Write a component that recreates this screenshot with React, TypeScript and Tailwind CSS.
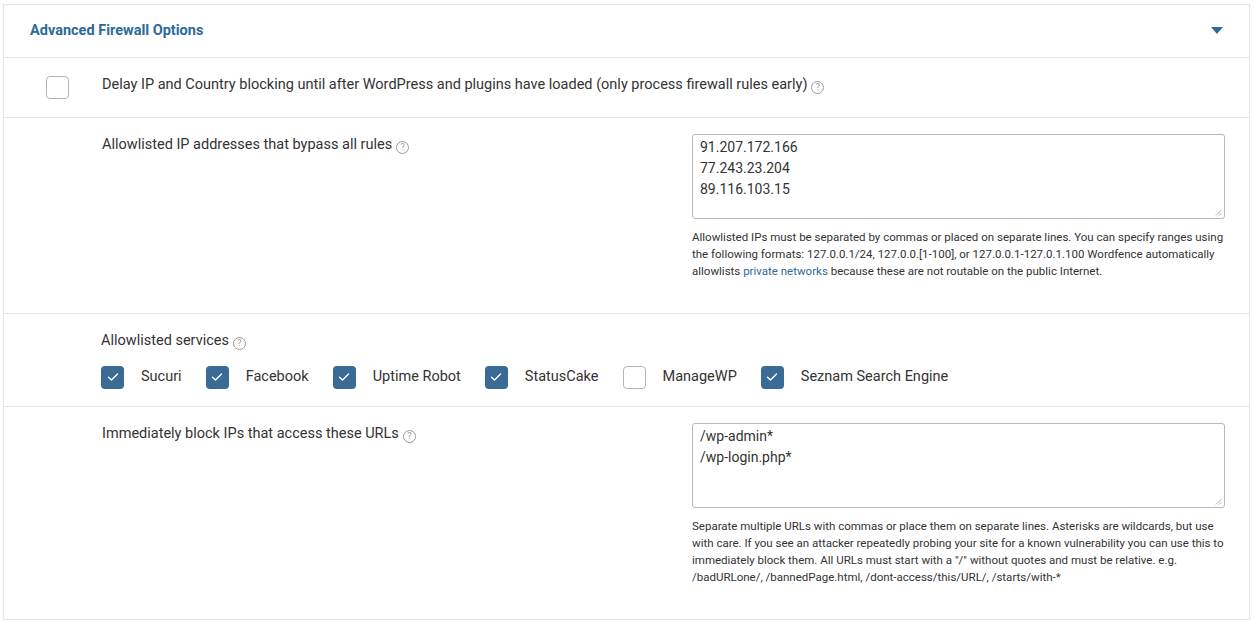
import React from "react";

function Help() {
  return (
    <span className="ml-1 inline-flex h-[13px] w-[13px] items-center justify-center rounded-full border border-[#9a9a9a] align-[-1px] text-[9px] leading-none text-[#9a9a9a]">
      ?
    </span>
  );
}

function Box({ checked }: { checked: boolean }) {
  return checked ? (
    <span className="flex h-[23px] w-[23px] shrink-0 items-center justify-center rounded-[4px] bg-[#3a6b96]">
      <svg width="12" height="10" viewBox="0 0 12 10" fill="none">
        <path d="M1.5 5.2 4.5 8 10.5 2" stroke="#fff" strokeWidth="1.4" strokeLinecap="round" strokeLinejoin="round" />
      </svg>
    </span>
  ) : (
    <span className="h-[23px] w-[23px] shrink-0 rounded-[4px] border border-[#b4b4b4] bg-white" />
  );
}

function Area({ lines }: { lines: string[] }) {
  return (
    <div className="relative h-[85px] w-[533px] rounded-[3px] border border-[#b8b8b8] px-[7px] pt-[2px] text-[14px] leading-[21px] text-[#333]">
      {lines.map((l) => (
        <div key={l}>{l}</div>
      ))}
      <svg className="absolute bottom-[2px] right-[2px]" width="7" height="7" viewBox="0 0 7 7">
        <path d="M6.5 1 1 6.5M6.5 4 4 6.5" stroke="#999" strokeWidth="0.8" />
      </svg>
    </div>
  );
}

const services: [string, boolean][] = [
  ["Sucuri", true],
  ["Facebook", true],
  ["Uptime Robot", true],
  ["StatusCake", true],
  ["ManageWP", false],
  ["Seznam Search Engine", true],
];

export default function App() {
  return (
    <div className="min-h-[622px] bg-white pl-[3px] pr-[4px] pt-[4px] font-[Roboto] text-[#333]" style={{ fontFamily: "Roboto, 'Liberation Sans', sans-serif" }}>
      <div className="border border-[#e4e4e4]">
        <div className="flex h-[53px] items-center justify-between border-b border-[#e4e4e4] pl-[26px] pr-[26px]">
          <span className="text-[14.5px] font-bold text-[#2d6a9a]">Advanced Firewall Options</span>
          <svg width="12" height="8" viewBox="0 0 12 8">
            <path d="M0 0h12L6 7z" fill="#2d6a9a" />
          </svg>
        </div>

        <div className="flex h-[60px] items-center border-b border-[#e4e4e4] pl-[42px]">
          <Box checked={false} />
          <span className="ml-[33px] -mt-[6px] text-[14.5px]">
            Delay IP and Country blocking until after WordPress and plugins have loaded (only process firewall rules early)
            <Help />
          </span>
        </div>

        <div className="flex h-[196px] border-b border-[#e4e4e4] pl-[98px] pt-[16px]">
          <div className="w-[590px] text-[14.5px]">
            Allowlisted IP addresses that bypass all rules
            <Help />
          </div>
          <div>
            <Area lines={["91.207.172.166", "77.243.23.204", "89.116.103.15"]} />
            <p className="mt-[10px] w-[535px] text-[11.5px] leading-[17px]">
              Allowlisted IPs must be separated by commas or placed on separate lines. You can specify ranges using the following formats: 127.0.0.1/24, 127.0.0.[1-100], or 127.0.0.1-127.0.1.100 Wordfence automatically allowlists{" "}
              <span className="text-[#2d6a9a]">private networks</span> because these are not routable on the public Internet.
            </p>
          </div>
        </div>

        <div className="h-[93px] border-b border-[#e4e4e4] pl-[97px] pt-[16px]">
          <div className="text-[14.5px]">
            Allowlisted services
            <Help />
          </div>
          <div className="mt-[14px] flex items-center">
            {services.map(([name, c]) => (
              <div key={name} className="mr-[24px] flex items-center">
                <Box checked={c} />
                <span className="ml-[17px] text-[14.5px]">{name}</span>
              </div>
            ))}
          </div>
        </div>

        <div className="flex h-[212px] pl-[98px] pt-[16px]">
          <div className="w-[590px] text-[14.5px]">
            Immediately block IPs that access these URLs
            <Help />
          </div>
          <div>
            <Area lines={["/wp-admin*", "/wp-login.php*"]} />
            <p className="mt-[10px] w-[535px] text-[11.5px] leading-[17px]">
              Separate multiple URLs with commas or place them on separate lines. Asterisks are wildcards, but use with care. If you see an attacker repeatedly probing your site for a known vulnerability you can use this to immediately block them. All URLs must start with a "/" without quotes and must be relative. e.g. /badURLone/, /bannedPage.html, /dont-access/this/URL/, /starts/with-*
            </p>
          </div>
        </div>
      </div>
    </div>
  );
}
